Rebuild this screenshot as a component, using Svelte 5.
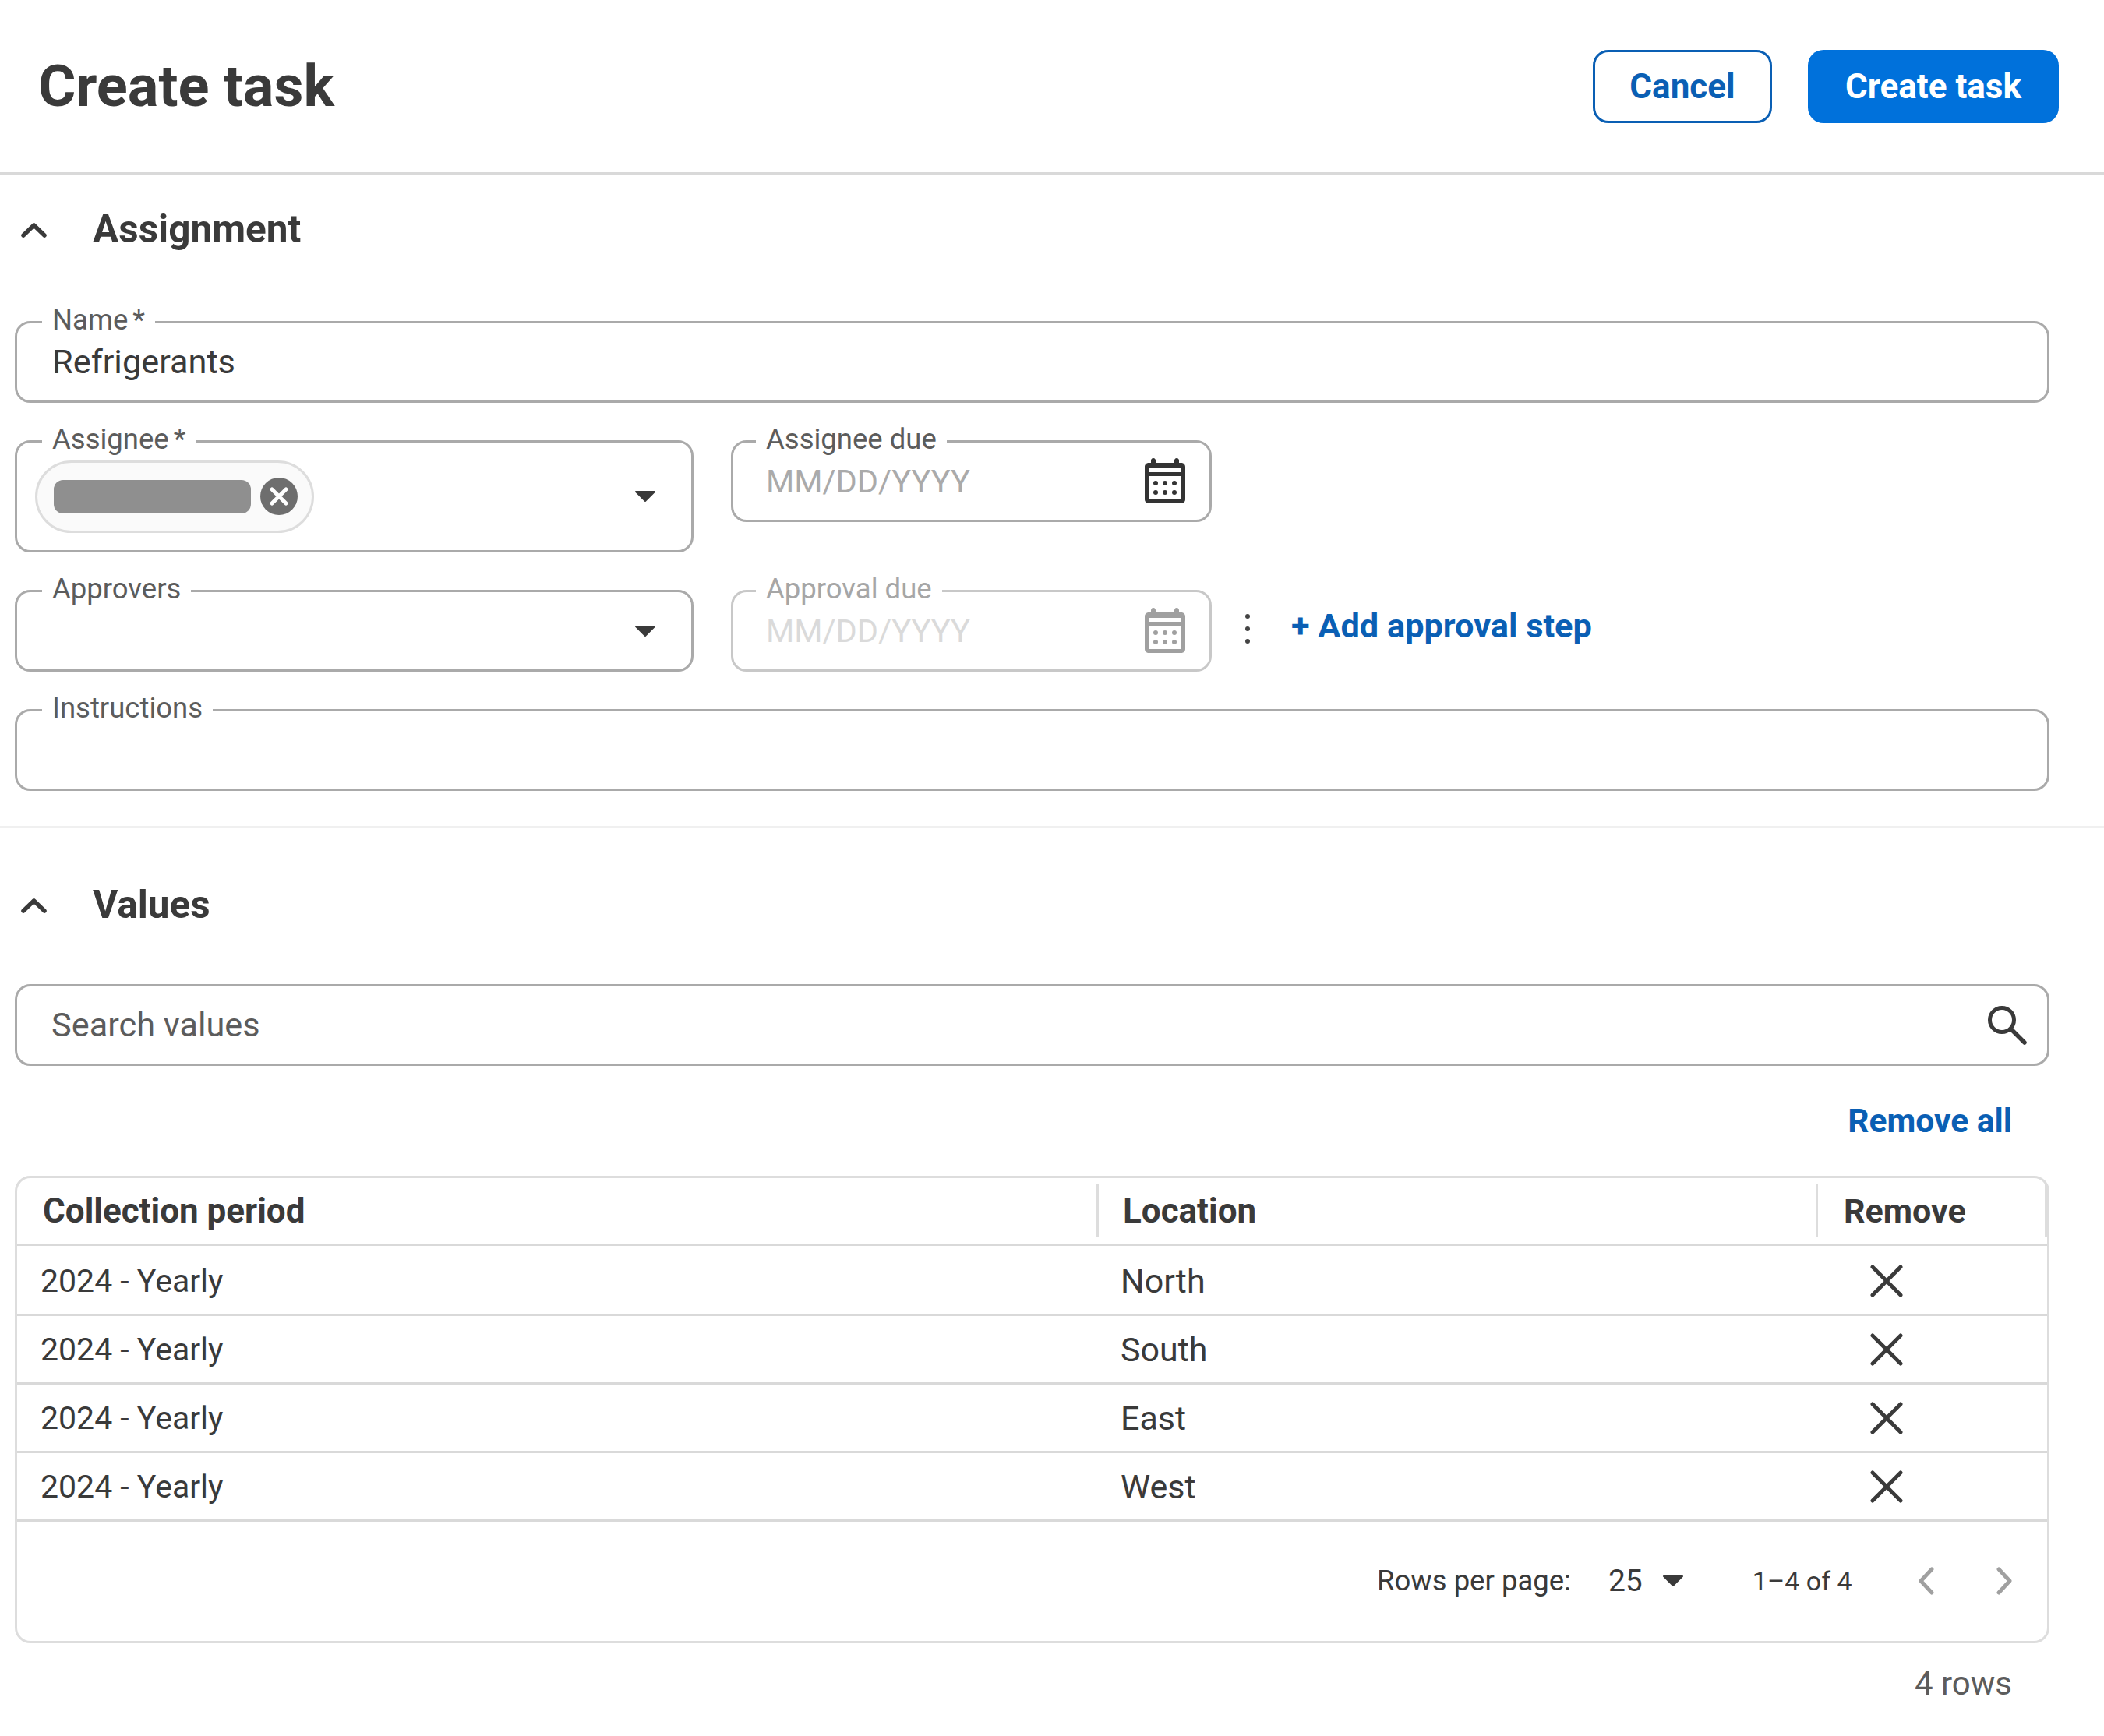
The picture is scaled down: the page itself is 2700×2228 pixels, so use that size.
<script lang="ts">
  const rows = [
    { period: '2024 - Yearly', location: 'North' },
    { period: '2024 - Yearly', location: 'South' },
    { period: '2024 - Yearly', location: 'East' },
    { period: '2024 - Yearly', location: 'West' }
  ];
</script>

{#snippet chevronUp()}
  <svg class="chevron" viewBox="0 0 33 20" aria-hidden="true">
    <path d="M3 17 16.500 4 30 17" fill="none" stroke="currentColor" stroke-width="5.500" stroke-linecap="round" stroke-linejoin="round" />
  </svg>
{/snippet}

{#snippet caret()}
  <svg class="caret" viewBox="0 0 28 16" aria-hidden="true">
    <path d="M2 2h24L14 14Z" fill="currentColor" stroke="currentColor" stroke-width="2" stroke-linejoin="round" />
  </svg>
{/snippet}

{#snippet calendar()}
  <svg class="calendar" viewBox="0 0 52 58" aria-hidden="true">
    <path fill="currentColor" fill-rule="evenodd" d="M11 0c2 0 3 1.500 3 3.500V6h24V3.500C38 1.500 39 0 41 0s3 1.500 3 3.500V6h3c2.800 0 5 2.200 5 5v42c0 2.800-2.200 5-5 5H5c-2.800 0-5-2.200-5-5V11c0-2.800 2.200-5 5-5h3V3.500C8 1.500 9 0 11 0ZM6 13v5h40v-5ZM6 23v30h40V23Z" />
    <g fill="currentColor">
      <circle cx="14" cy="32" r="3" /><circle cx="26" cy="32" r="3" /><circle cx="38" cy="32" r="3" />
      <circle cx="14" cy="44" r="3" /><circle cx="26" cy="44" r="3" /><circle cx="38" cy="44" r="3" />
    </g>
  </svg>
{/snippet}

<div class="page">
  <header class="topbar">
    <h1>Create task</h1>
    <div class="actions">
      <button class="btn outline">Cancel</button>
      <button class="btn primary">Create task</button>
    </div>
  </header>

  <section class="assignment">
    <div class="section-head">
      {@render chevronUp()}
      <h2>Assignment</h2>
    </div>

    <div class="form">
      <div class="field">
        <span class="label">Name<i>*</i></span>
        <span class="value">Refrigerants</span>
      </div>

      <div class="pair">
        <div class="field tall">
          <span class="label">Assignee<i>*</i></span>
          <div class="chip">
            <span class="redacted"></span>
            <svg class="chip-x" viewBox="0 0 48 48" aria-hidden="true">
              <circle cx="24" cy="24" r="24" fill="#6e6e6e" />
              <path d="M15 15l18 18M33 15 15 33" stroke="#fff" stroke-width="5" stroke-linecap="round" />
            </svg>
          </div>
          {@render caret()}
        </div>
        <div class="field date">
          <span class="label">Assignee due</span>
          <span class="placeholder">MM/DD/YYYY</span>
          {@render calendar()}
        </div>
      </div>

      <div class="pair">
        <div class="field">
          <span class="label">Approvers</span>
          {@render caret()}
        </div>
        <div class="field date disabled">
          <span class="label">Approval due</span>
          <span class="placeholder">MM/DD/YYYY</span>
          {@render calendar()}
        </div>
        <div class="step-tools">
          <span class="dots"><b></b><b></b><b></b></span>
          <a class="link" href="#add">+ Add approval step</a>
        </div>
      </div>

      <div class="field">
        <span class="label">Instructions</span>
      </div>
    </div>
  </section>

  <section class="values">
    <div class="section-head values-head">
      {@render chevronUp()}
      <h2>Values</h2>
    </div>

    <div class="field search">
      <span class="search-text">Search values</span>
      <svg class="search-icon" viewBox="0 0 52 52" aria-hidden="true">
        <circle cx="20" cy="20" r="15.500" fill="none" stroke="currentColor" stroke-width="5" />
        <path d="M32 32l17 17" stroke="currentColor" stroke-width="5.500" stroke-linecap="round" />
      </svg>
    </div>

    <div class="remove-all"><a class="link" href="#remove">Remove all</a></div>

    <div class="table">
      <div class="tr head">
        <div class="th">Collection period</div>
        <div class="th">Location</div>
        <div class="th">Remove</div>
      </div>
      {#each rows as row}
        <div class="tr">
          <div class="td period">{row.period}</div>
          <div class="td">{row.location}</div>
          <div class="td icon-cell">
            <svg class="x" viewBox="0 0 42 42" aria-hidden="true">
              <path d="M3 3l36 36M39 3 3 39" stroke="currentColor" stroke-width="5" stroke-linecap="round" />
            </svg>
          </div>
        </div>
      {/each}
      <div class="pager">
        <span class="rpp">Rows per page:</span>
        <span class="rpp-val">25</span>
        {@render caret()}
        <span class="range">1–4 of 4</span>
        <svg class="page-arrow prev" viewBox="0 0 20 36" aria-hidden="true">
          <path d="M17 3 3 18l14 15" fill="none" stroke="currentColor" stroke-width="5" stroke-linecap="round" stroke-linejoin="round" />
        </svg>
        <svg class="page-arrow next" viewBox="0 0 20 36" aria-hidden="true">
          <path d="M3 3l14 15L3 33" fill="none" stroke="currentColor" stroke-width="5" stroke-linecap="round" stroke-linejoin="round" />
        </svg>
      </div>
    </div>

    <div class="row-count">4 rows</div>
  </section>
</div>

<style>
  :global(body) {
    margin: 0;
    background: #fff;
  }

  .page {
    width: 2700px;
    height: 2228px;
    font-family: Roboto, "Liberation Sans", sans-serif;
    color: #3a3a3a;
    overflow: hidden;
  }

  .topbar {
    height: 221px;
    box-sizing: content-box;
    display: flex;
    align-items: center;
    justify-content: space-between;
    padding: 0 58px 0 50px;
    border-bottom: 3px solid #d9d9d9;
  }

  h1 {
    margin: 0;
    font-size: 74px;
    font-weight: 700;
    margin-left: -1px;
  }

  .actions {
    display: flex;
    gap: 46px;
    margin-top: 1px;
  }

  .btn {
    height: 94px;
    border-radius: 20px;
    font: 700 44px Roboto, "Liberation Sans", sans-serif;
    box-sizing: border-box;
  }

  .outline {
    width: 230px;
    background: #fff;
    color: #0a5fb4;
    border: 3px solid #0a5fb4;
  }

  .primary {
    width: 322px;
    background: #0071db;
    color: #fff;
    border: 0;
  }

  .assignment {
    padding: 0 70px 0 19px;
    border-bottom: 3px solid #f0f0f0;
    height: 836px;
    box-sizing: content-box;
  }

  .section-head {
    height: 139px;
    display: flex;
    align-items: center;
    margin-left: 8px;
  }

  .values-head {
    height: 200px;
    padding-bottom: 4px;
    box-sizing: border-box;
  }

  h2 {
    margin: 0 0 0 59px;
    font-size: 49.500px;
    font-weight: 700;
  }

  .chevron {
    width: 33px;
    height: 20px;
    flex: none;
    margin-top: 2px;
  }

  .form {
    margin-top: 49px;
    display: flex;
    flex-direction: column;
    gap: 48px;
  }

  .pair {
    display: flex;
    align-items: flex-start;
    gap: 48px;
  }

  .pair > .field:first-child {
    width: 871px;
  }

  .field {
    position: relative;
    box-sizing: border-box;
    height: 105px;
    border: 3px solid #aaa;
    border-radius: 20px;
    display: flex;
    align-items: center;
    padding: 0 45px;
    font-size: 43.300px;
  }

  .tall {
    height: 144px;
    padding-left: 23px;
  }

  .date {
    width: 617px;
    flex: none;
    padding-left: 42px;
  }

  .label {
    position: absolute;
    left: 32px;
    top: -25px;
    padding: 0 13px;
    background: #fff;
    color: #5c5c5c;
    font-size: 36.500px;
    line-height: 42px;
    white-space: nowrap;
  }

  .date .label {
    left: 29px;
  }

  .label i {
    font-style: normal;
    margin-left: 6px;
  }

  .placeholder {
    color: #aaa;
    font-size: 41.500px;
  }

  .disabled {
    border-color: #c8c8c8;
  }

  .disabled .label {
    color: #a6a6a6;
  }

  .disabled .placeholder {
    color: #dadada;
  }

  .disabled .calendar {
    color: #a0a0a0;
  }

  .calendar {
    position: absolute;
    right: 31px;
    top: 20px;
    width: 52px;
    height: 58px;
    color: #333;
  }

  .caret {
    position: absolute;
    right: 45px;
    top: calc(50% - 8px);
    width: 28px;
    height: 16px;
  }

  .chip {
    box-sizing: border-box;
    width: 358px;
    height: 93px;
    border: 3px solid #ddd;
    border-radius: 47px;
    background: #fafafa;
    display: flex;
    align-items: center;
    padding-left: 21px;
    gap: 12px;
  }

  .redacted {
    width: 253px;
    height: 43px;
    border-radius: 12px;
    background: #8f8f8f;
  }

  .chip-x {
    width: 48px;
    height: 48px;
  }

  .step-tools {
    display: flex;
    align-items: center;
    height: 92px;
    margin-left: -6px;
  }

  .dots {
    display: flex;
    flex-direction: column;
    gap: 10px;
    margin-left: 1px;
    margin-top: 8px;
  }

  .dots b {
    width: 6px;
    height: 6px;
    border-radius: 50%;
    background: #444;
  }

  .link {
    color: #0a5fb4;
    font-size: 43.300px;
    font-weight: 700;
    text-decoration: none;
  }

  .step-tools .link {
    margin-left: 53px;
    margin-top: 1px;
  }

  .values {
    padding: 0 70px 0 19px;
  }

  .search {
    padding-left: 44px;
  }

  .search-text {
    color: #5c5c5c;
  }

  .search-icon {
    position: absolute;
    right: 26px;
    top: 23px;
    width: 52px;
    height: 52px;
  }

  .remove-all {
    height: 141px;
    display: flex;
    align-items: center;
    justify-content: flex-end;
    padding-right: 48px;
  }

  .remove-all .link {
    font-size: 42.500px;
  }

  .table {
    box-sizing: border-box;
    height: 600px;
    border: 3px solid #ddd;
    border-radius: 20px;
  }

  .tr {
    display: grid;
    grid-template-columns: 1388px 923px 1fr;
    height: 88px;
    box-sizing: border-box;
    border-bottom: 3px solid #d9d9d9;
    font-size: 43px;
  }

  .head {
    height: 87px;
    font-weight: 700;
    font-size: 44px;
  }

  .head + .tr {
    height: 90px;
    padding-top: 2px;
  }

  .th {
    display: flex;
    align-items: center;
    padding-left: 33px;
    position: relative;
  }

  .th:nth-child(2) {
    padding-left: 31px;
  }

  .th:nth-child(3) {
    font-size: 43px;
  }

  .th::after {
    content: "";
    position: absolute;
    right: 0;
    top: 8px;
    bottom: 8px;
    width: 3px;
    background: #ddd;
  }

  .td {
    display: flex;
    align-items: center;
    padding-left: 28px;
  }

  .period {
    padding-left: 30px;
    font-size: 41px;
  }

  .icon-cell {
    padding-left: 67px;
  }

  .x {
    width: 42px;
    height: 42px;
  }

  .pager {
    height: 151px;
    display: flex;
    align-items: center;
    font-size: 36.500px;
    padding-left: 1745px;
  }

  .pager .caret {
    position: static;
    margin-left: 25px;
  }

  .rpp-val {
    margin-left: 48px;
    font-size: 39px;
  }

  .range {
    margin-left: 88px;
    font-size: 34px;
  }

  .page-arrow {
    width: 20px;
    height: 36px;
    color: #a0a0a0;
  }

  .prev {
    margin-left: 85px;
  }

  .next {
    margin-left: 80px;
  }

  .row-count {
    height: 102px;
    display: flex;
    align-items: center;
    justify-content: flex-end;
    padding-right: 48px;
    font-size: 42px;
    color: #5c5c5c;
  }
</style>
